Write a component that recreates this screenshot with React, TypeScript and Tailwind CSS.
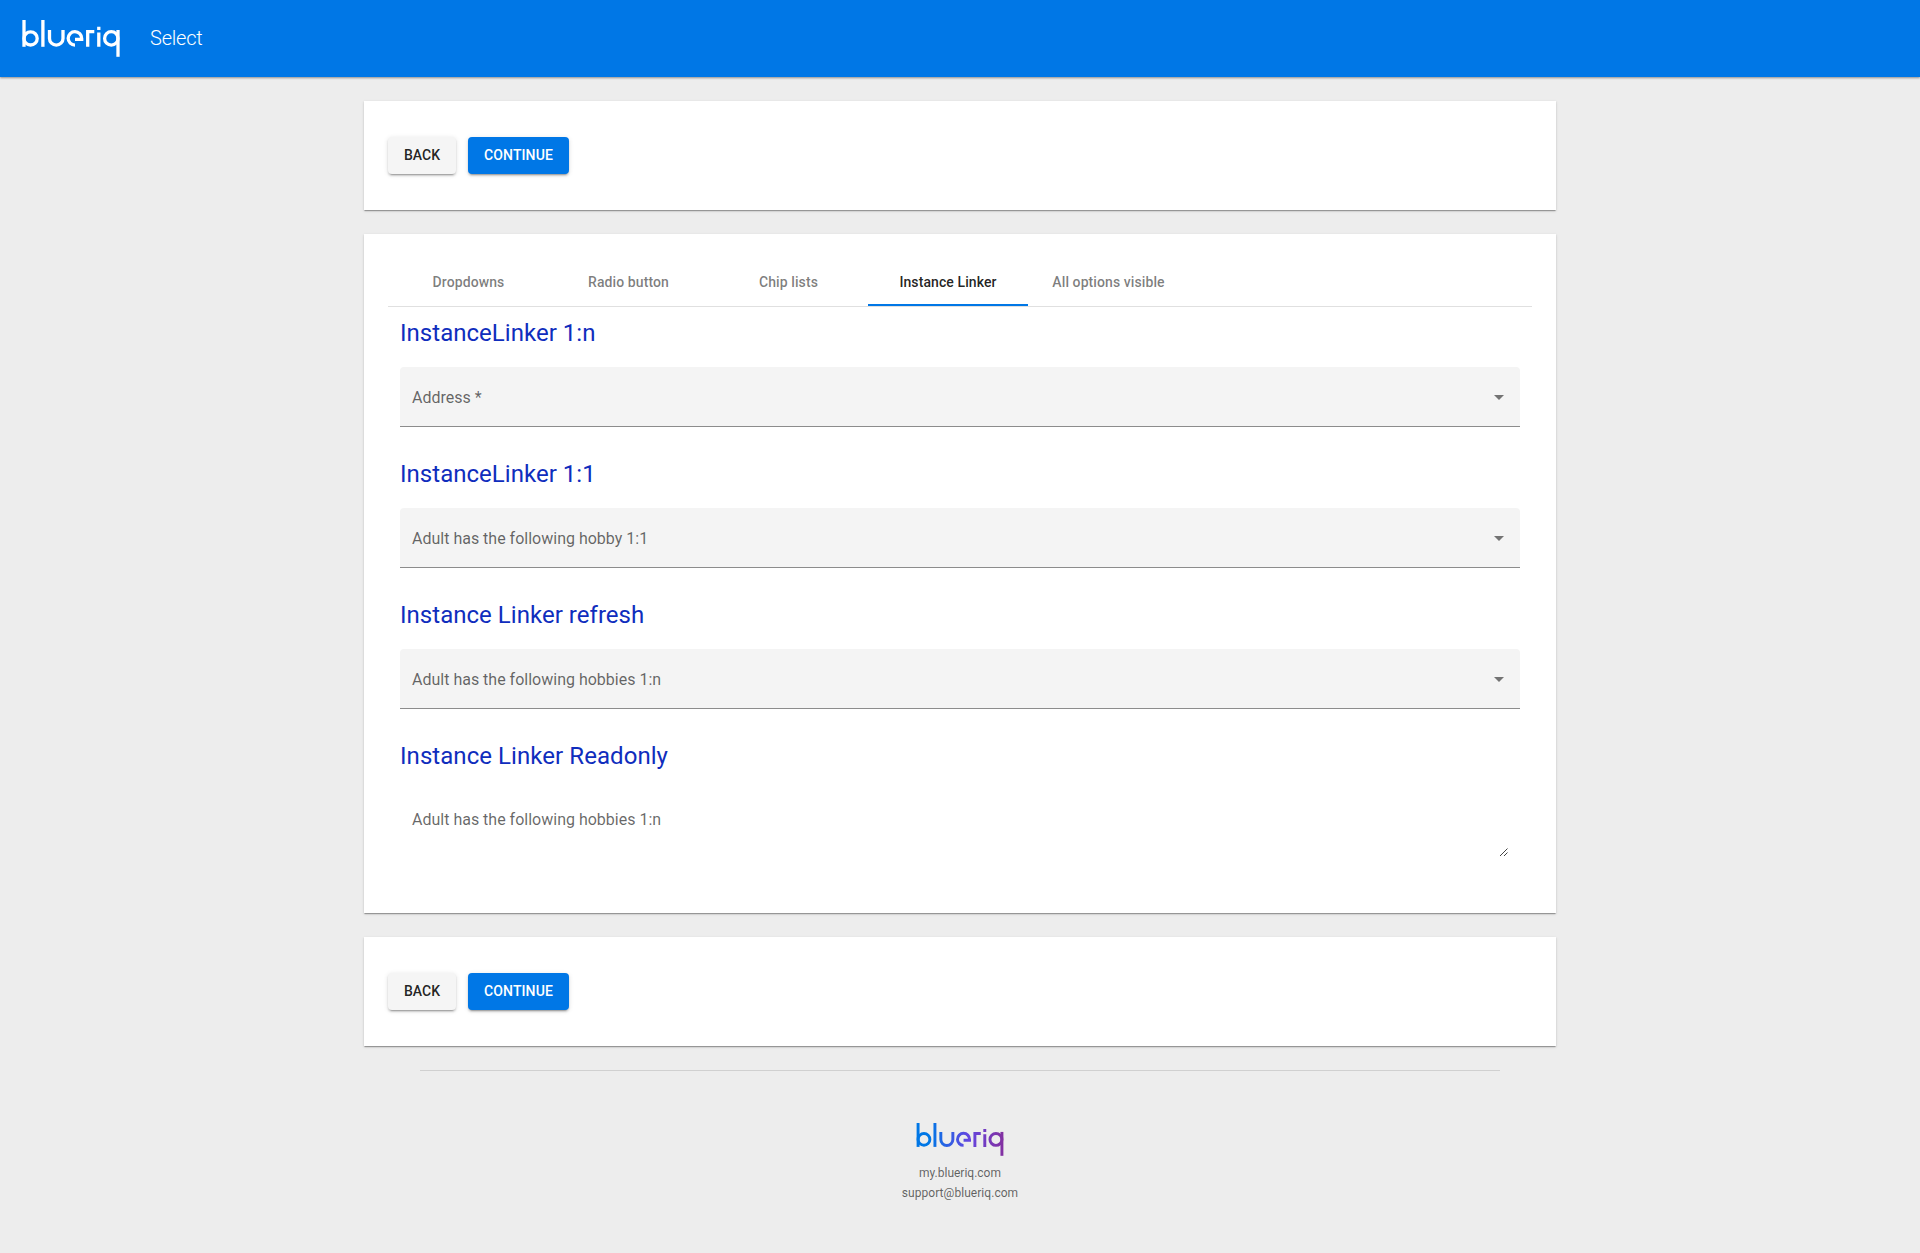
import { useId } from "react";

const tabs = ["Dropdowns", "Radio button", "Chip lists", "Instance Linker", "All options visible"];

const fields = [
  { title: "InstanceLinker 1:n", label: "Address *" },
  { title: "InstanceLinker 1:1", label: "Adult has the following hobby 1:1" },
  { title: "Instance Linker refresh", label: "Adult has the following hobbies 1:n" },
];

function Logo({ className, gradient }: { className: string; gradient?: boolean }) {
  const id = useId();
  return (
    <svg
      viewBox="0 0 98 37"
      className={className}
      fill="none"
      stroke={gradient ? `url(#${id})` : "#fff"}
      strokeWidth="3.3"
      aria-label="blueriq"
    >
      <defs>
        <linearGradient id={id} gradientUnits="userSpaceOnUse" x1="0" y1="0" x2="98" y2="0">
          <stop offset="0.15" stopColor="#0077e6" />
          <stop offset="0.6" stopColor="#6446e0" />
          <stop offset="1" stopColor="#8330a0" />
        </linearGradient>
      </defs>
      <path d="M2 0V26.8" />
      <circle cx="8.6" cy="18.4" r="6.6" />
      <path d="M20.9 0V26.8" />
      <path d="M27.5 10V18.4a6.75 6.75 0 0 0 13.5 0V10" />
      <path d="M53 25.1a6.75 6.75 0 1 1 6.7-6.7v0.9H53" />
      <path d="M65.7 26.8V11.7H72.3" />
      <path d="M76.8 12.5V26.8M76.8 6.8V10" />
      <circle cx="89.3" cy="18.4" r="6.7" />
      <path d="M96 10V36.8" />
    </svg>
  );
}

function Actions() {
  return (
    <section className="flex h-[109px] items-center gap-3 bg-white px-6 shadow-[0_2px_1px_-1px_rgba(0,0,0,0.2),0_1px_1px_0_rgba(0,0,0,0.14),0_1px_3px_0_rgba(0,0,0,0.12)]">
      <button className="h-[37px] w-[68px] rounded bg-[#f5f5f5] pb-px text-center text-sm leading-none font-medium text-black/87 shadow-[0_3px_1px_-2px_rgba(0,0,0,0.2),0_2px_2px_0_rgba(0,0,0,0.14),0_1px_5px_0_rgba(0,0,0,0.12)]">
        BACK
      </button>
      <button className="h-[37px] w-[101px] rounded bg-[#0077e6] pb-px text-center text-sm leading-none font-medium tracking-[0.1px] text-white shadow-[0_3px_1px_-2px_rgba(0,0,0,0.2),0_2px_2px_0_rgba(0,0,0,0.14),0_1px_5px_0_rgba(0,0,0,0.12)]">
        CONTINUE
      </button>
    </section>
  );
}

export default function App() {
  return (
    <div className="min-h-[1253px] bg-[#ededed] font-[Roboto,sans-serif] text-black/87">
      <header className="flex h-[77px] items-center bg-[#0077e6] pl-[22px] shadow-[0_1px_2px_rgba(0,0,0,0.4)]">
        <Logo className="h-[37px] w-[98px]" />
        <h1 className="mb-[2px] ml-[30px] text-xl font-light tracking-[-0.2px] text-white">Select</h1>
      </header>

      <main className="mx-auto mt-6 flex w-[1192px] flex-col gap-6">
        <Actions />
        <section className="h-[679px] bg-white px-6 pt-6 shadow-[0_2px_1px_-1px_rgba(0,0,0,0.2),0_1px_1px_0_rgba(0,0,0,0.14),0_1px_3px_0_rgba(0,0,0,0.12)]">
          <nav className="flex h-[49px] border-b border-black/12">
            {tabs.map((tab, i) => (
              <button
                key={tab}
                className={
                  i === 3
                    ? "w-40 border-b-2 border-[#0077e6] pt-0.5 text-sm font-medium tracking-[0.09px]"
                    : "w-40 pl-px text-sm font-medium tracking-[0.09px] text-black/52"
                }
              >
                {tab}
              </button>
            ))}
          </nav>
          <div className="px-3 pt-[10px]">
            {fields.map((f) => (
              <div key={f.title} className="h-[141px]">
                <h2 className="text-2xl leading-8 tracking-[0.03px] text-[#0f2dbd]">{f.title}</h2>
                <div className="mt-[18px] flex h-[60px] items-center justify-between rounded-t border-b border-[#8c8c8c] bg-[#f4f4f4] pt-[2px] pr-4 pl-3 text-base text-black/60">
                  <span>{f.label}</span>
                  <span className="h-0 w-0 border-x-[5px] border-t-[5px] border-x-transparent border-t-[#737373]" />
                </div>
              </div>
            ))}
            <h2 className="text-2xl leading-8 tracking-[0.06px] text-[#0f2dbd]">Instance Linker Readonly</h2>
            <div className="mt-[18px] flex h-[66px] justify-between px-3 text-base text-black/60">
              <span className="mt-[18px]">Adult has the following hobbies 1:n</span>
              <svg className="self-end" width="8" height="8" viewBox="0 0 8 8" stroke="#444" strokeWidth="1">
                <path d="M0 8L7.5 0.5M4 8L7.5 4.5" />
              </svg>
            </div>
          </div>
        </section>
        <Actions />
      </main>

      <footer className="mx-auto mt-6 flex w-[1080px] flex-col items-center border-t border-[#d0d0d0] pt-[52px] text-xs leading-5 text-black/60">
        <Logo className="mb-[7px] h-[33px] w-[88px]" gradient />
        <span>my.blueriq.com</span>
        <span className="tracking-[0.05px]">support@blueriq.com</span>
      </footer>
    </div>
  );
}
